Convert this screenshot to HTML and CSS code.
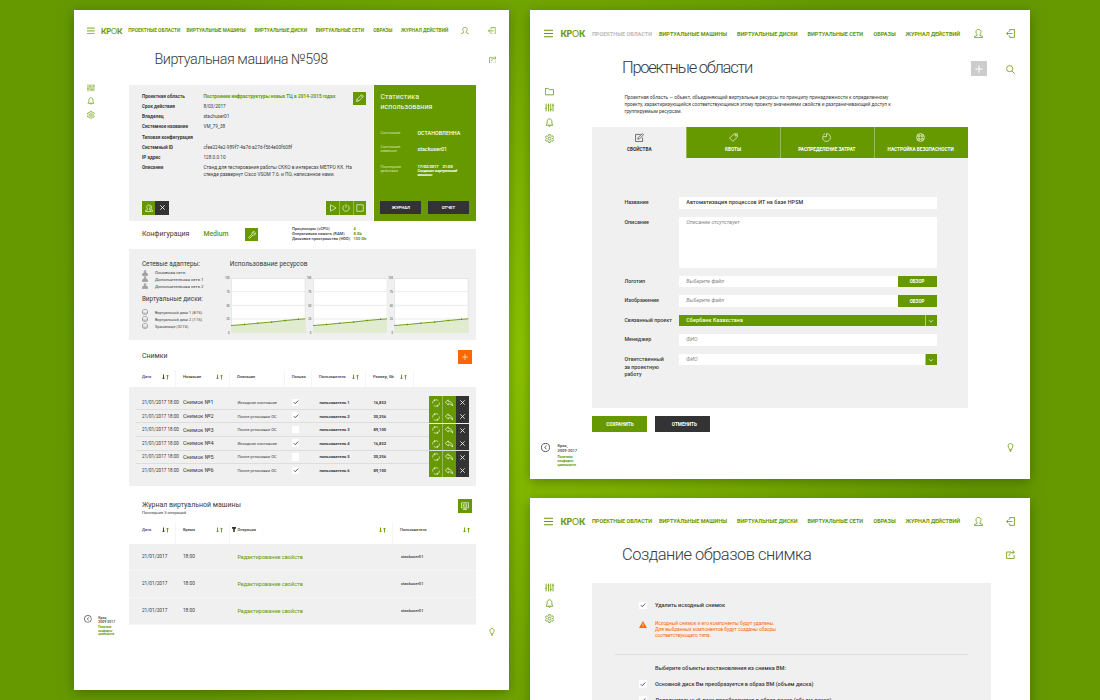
FILE: index.html
```html
<!DOCTYPE html>
<html lang="ru">
<head>
<meta charset="utf-8">
<title>КРОК</title>
<link rel="stylesheet" href="styles.css">
</head>
<body>

<svg class="sprite">
    <symbol id="i-menu" viewBox="0 0 18 18"><path d="M0 2.5h18M0 9h18M0 15.5h18"/></symbol>
    <symbol id="i-user" viewBox="0 0 16 16"><path d="M5.5 10C3.6 8 3.5 5.500 3.600 4.200 3.800 2 5.700.8 8 .8s4.200 1.200 4.400 3.400c.1 1.300 0 3.800-1.900 5.800v1.400l4.700 1.800v2H.8v-2l4.700-1.800z"/></symbol>
    <symbol id="i-exit" viewBox="0 0 16 16"><path d="M6.500 4.500V1h8.500v14H6.500v-3.500M11.500 8H1M4.500 4.500L1 8l3.500 3.500"/></symbol>
    <symbol id="i-share" viewBox="0 0 16 16"><path d="M9 3.500H1v11.500h13.500V9M5.500 10.500c0-4.500 3-6.500 9-6.500M11.500 1l3.500 3-3.500 3"/></symbol>
    <symbol id="i-folder" viewBox="0 0 16 16"><path d="M.8 14V2.500h5l1.700 2.200h7.700V14z"/></symbol>
    <symbol id="i-sliders" viewBox="0 0 16 16"><path d="M2 1v14M6.200 1v14M10.200 1v14M14.200 1v14M.5 9h3M4.700 4.500h3M8.700 11.500h3M12.700 4h3"/></symbol>
    <symbol id="i-bell" viewBox="0 0 16 16"><path d="M1.800 12.800c1.700-1.500 2-3 2-6.300C3.800 3.500 5.500 1.500 8 1.500s4.200 2 4.200 5c0 3.300.3 4.800 2 6.300zM6 13c.2 2.600 3.800 2.600 4 0"/></symbol>
    <symbol id="i-gear" viewBox="0 0 16 16"><path d="M6.500 1h3l.5 2 1.700.9 2-.6 1.500 2.500L13.700 7.200v1.600l1.500 1.400-1.500 2.500-2-.6-1.700.9-.5 2h-3L6 13l-1.700-.9-2 .6-1.500-2.500 1.500-1.400V7.200L.8 5.800l1.500-2.500 2 .6L6 3z"/><circle cx="8" cy="8" r="2.600"/></symbol>
    <symbol id="i-copy" viewBox="0 0 16 16"><circle cx="8" cy="8" r="7.200"/><path d="M9.800 5.200L6.500 8l3.300 2.800"/></symbol>
    <symbol id="i-bulb" viewBox="0 0 16 16"><path d="M6 11.500C6 9 3.800 8.500 3.800 5.200 3.800 2.500 5.600 1 8 1s4.200 1.500 4.200 4.200C12.200 8.500 10 9 10 11.500zM6.200 13.500h3.600M7 15.200h2"/></symbol>
    <symbol id="i-search" viewBox="0 0 16 16"><circle cx="6.500" cy="6.500" r="5.500"/><path d="M10.500 10.500l5 5"/></symbol>
    <symbol id="i-plus" viewBox="0 0 16 16"><path d="M8 2v12M2 8h12"/></symbol>
    <symbol id="i-pencil" viewBox="0 0 16 16"><path d="M1 15l1-4.500L11.500 1 15 4.500 5.500 14zM9.500 3L13 6.500M2 10.500L5.500 14"/></symbol>
    <symbol id="i-x" viewBox="0 0 16 16"><path d="M3 3l10 10M13 3L3 13"/></symbol>
    <symbol id="i-play" viewBox="0 0 16 16"><path d="M3 1.500v13L14 8z"/></symbol>
    <symbol id="i-power" viewBox="0 0 16 16"><path d="M8 .5v7M5 2.500a6.400 6.400 0 1 0 6 0"/></symbol>
    <symbol id="i-stop" viewBox="0 0 16 16"><path d="M1.500 1.500h13v13h-13z"/></symbol>
    <symbol id="i-users" viewBox="0 0 16 16"><path d="M5 10C2.500 7 3.500 1.500 7 1.500S11.500 7 9 10v1.500l3 1.500v2H1v-2l4-1.500zM10.500 2.500c3 .5 3.200 5 1.200 7.500v1l3.500 1.500V15h-2"/></symbol>
    <symbol id="i-wrench" viewBox="0 0 16 16"><path d="M1 13L8 6.500C7 3 9.500.500 12.700 1.200L10.500 3.500l2 2 2.400-2C15.500 7 13 9 9.800 8.200L3 15z"/></symbol>
    <symbol id="i-net" viewBox="0 0 16 16"><path d="M6 2h4v4H6zM1 11h4v3.500H1zM6 11h4v3.500H6zM11 11h4v3.500h-4zM8 6v5M3 11V8.500h10V11"/></symbol>
    <symbol id="i-disk" viewBox="0 0 16 16"><path d="M1.500 4c0-3.500 13-3.500 13 0v8c0 3.500-13 3.500-13 0zM1.500 9c0 3 13 3 13 0"/></symbol>
    <symbol id="i-check" viewBox="0 0 16 16"><path d="M2 8.500l4 4L14 4"/></symbol>
    <symbol id="i-sync" viewBox="0 0 16 16"><path d="M6 2C2 3 1 6 1.500 9M3.500 12.500C5 14.500 7 15 9 14.500M10 14c4-1 5-4 4.500-7M12.500 3.500C11 1.500 9 1 7 1.500M4 1l2.500 1L5 4.500M12 15l-2.500-1L11 11.500"/></symbol>
    <symbol id="i-reply" viewBox="0 0 16 16"><path d="M.8 6.500L6.500 1.500v3c5 0 8.500 3 8.700 9.500-1.500-3-4-4.500-8.700-4.500v2.500z"/></symbol>
    <symbol id="i-book" viewBox="0 0 16 16"><path d="M1 1.500h14v10.500H1zM8 1.500V14M3.500 4.500h2.500M3.500 7h2.500M3.500 9.500h2.500M10 4.500h2.500M10 7h2.500M10 9.500h2.500M4 15h8"/></symbol>
    <symbol id="i-edit" viewBox="0 0 16 16"><path d="M10 2.500H1v12.700h12.500V8M5 11l.8-3L13 1l2.200 2.200-7.200 7z"/></symbol>
    <symbol id="i-tag" viewBox="0 0 16 16"><path d="M1 9L9 1.500l5.500-.2L15 7 7 14.800z"/><circle cx="11.800" cy="4.300" r="1.200"/></symbol>
    <symbol id="i-pie" viewBox="0 0 16 16"><path d="M8 1a7 7 0 1 1-6.800 5.500H8z"/><path d="M5.500 1L1.500 4"/></symbol>
    <symbol id="i-ring" viewBox="0 0 16 16"><circle cx="8" cy="8" r="7"/><circle cx="8" cy="8" r="3"/><path d="M5 1.800l1 3.800M11 1.800l-1 3.800M5 14.200l1-3.800M11 14.200l-1-3.800M1.800 5l3.800 1M1.800 11l3.800-1M14.200 5l-3.800 1M14.200 11l-3.800-1"/></symbol>
    <symbol id="i-down" viewBox="0 0 16 16"><path d="M3 6l5 5 5-5"/></symbol>
    <symbol id="i-sort" viewBox="0 0 14 12"><path d="M3 1v9M.8 7.500L3 10l2.200-2.500"/><path class="up" d="M11 11V2M8.800 4.500L11 2l2.200 2.500"/></symbol>
    <symbol id="i-chart" viewBox="0 0 75 55" preserveAspectRatio="none">
        <path class="plot" d="M.25.25h74.500v54.500H.25z"/>
        <path class="grid" d="M0 13.700h75M0 27.300h75M0 41h75"/>
        <path class="area" d="M0 47.500L13.500 46.500 27 45.200 41 44 54.500 42.500 68 41.300 75 40.800V55H0z"/>
        <path class="line" d="M0 47.500L13.500 46.500 27 45.200 41 44 54.500 42.500 68 41.300 75 40.800"/>
        <path class="dots" d="M13 46.500h1M26.500 45.200h1M40.500 44h1M54 42.500h1M67.500 41.300h1"/>
    </symbol>
</svg>

<!-- Виртуальная машина -->
<section class="screen vm">
    <header class="topbar">
        <svg class="ico menu"><use href="#i-menu"/></svg>
        <div class="logo">КР<span>О</span>К</div>
        <nav>
            <a>ПРОЕКТНЫЕ ОБЛАСТИ</a><a>ВИРТУАЛЬНЫЕ МАШИНЫ</a><a>ВИРТУАЛЬНЫЕ ДИСКИ</a><a>ВИРТУАЛЬНЫЕ СЕТИ</a><a>ОБРАЗЫ</a><a>ЖУРНАЛ ДЕЙСТВИЙ</a>
        </nav>
        <svg class="ico"><use href="#i-user"/></svg>
        <svg class="ico exit"><use href="#i-exit"/></svg>
    </header>
    <div class="title-row">
        <h1>Виртуальная машина №598</h1>
        <svg class="ico"><use href="#i-share"/></svg>
    </div>
    <div class="body">
        <aside>
            <div class="side-menu">
                <svg class="ico"><use href="#i-sliders"/></svg>
                <svg class="ico"><use href="#i-bell"/></svg>
                <svg class="ico"><use href="#i-gear"/></svg>
            </div>
            <div class="copy">
                <svg class="ico"><use href="#i-copy"/></svg>
                <div>Крок,<br>2009-2017<a>Политика<br>конфиден-<br>циальности</a></div>
            </div>
        </aside>
        <main>
            <div class="info-row">
                <div class="info">
                    <dl>
                        <dt>Проектная область</dt><dd class="link">Построение инфраструктуры новых ТЦ в 2014-2015 годах</dd>
                        <dt>Срок действия</dt><dd>8/03/2017</dd>
                        <dt>Владелец</dt><dd>stachuser01</dd>
                        <dt>Системное название</dt><dd>VM_79_38</dd>
                        <dt>Типовая конфигурация</dt><dd></dd>
                        <dt>Системный ID</dt><dd>cfee224a2-989f7-4a7d-a27d-f564e00f608f</dd>
                        <dt>IP адрес</dt><dd>128.0.0.10</dd>
                        <dt>Описание</dt><dd class="descr">Станд для тестирования работы СККО в интересах МЕТРО КК. На<br>стенде развернут Cisco VSOM 7.6. и ПО, написанное нами.</dd>
                    </dl>
                    <button class="sq edit"><svg><use href="#i-pencil"/></svg></button>
                    <div class="info-btns">
                        <button class="sq"><svg><use href="#i-users"/></svg></button>
                        <button class="sq dark"><svg class="sm"><use href="#i-x"/></svg></button>
                        <span></span>
                        <button class="sq"><svg><use href="#i-play"/></svg></button>
                        <button class="sq line-left"><svg><use href="#i-power"/></svg></button>
                        <button class="sq line-left"><svg><use href="#i-stop"/></svg></button>
                    </div>
                </div>
                <div class="stats">
                    <h2>Статистика<br>использования</h2>
                    <div class="stat"><span>Состояние</span><b>ОСТАНОВЛЕННА</b></div>
                    <div class="stat who"><span>Состояние<br>изменил</span><b>stackuser01</b></div>
                    <div class="stat last"><span>Последние<br>действия</span><b>17/02/2017 &nbsp;&nbsp; 21:00<br><i>Создание виртуальной<br>машины</i></b></div>
                    <div class="stat-btns"><button>ЖУРНАЛ</button><button>ОТЧЕТ</button></div>
                </div>
            </div>

            <div class="config">
                <h3>Конфигурация</h3>
                <h3 class="medium">Medium</h3>
                <button class="sq"><svg><use href="#i-wrench"/></svg></button>
                <div class="specs">
                    <span>Процессоры (vCPU)</span><b>4</b>
                    <span>Оперативная память (RAM)</span><b>8 Gb</b>
                    <span>Дисковое пространство (HDD)</span><b>100 Gb</b>
                </div>
            </div>

            <div class="resources">
                <div class="res-list">
                    <h4>Сетевые адаптеры:</h4>
                    <p><svg><use href="#i-net"/></svg>Основная сеть</p>
                    <p><svg><use href="#i-net"/></svg>Дополнительная сеть 1</p>
                    <p><svg><use href="#i-net"/></svg>Дополнительная сеть 2</p>
                    <h4 class="disks">Виртуальные диски:</h4>
                    <p class="d"><svg><use href="#i-disk"/></svg>Виртуальный диск 1 (8 Гб)</p>
                    <p class="d"><svg><use href="#i-disk"/></svg>Виртуальный диск 2 (1 Гб)</p>
                    <p class="d"><svg><use href="#i-disk"/></svg>Хранилище (32 Гб)</p>
                </div>
                <div class="res-charts">
                    <h4>Использование ресурсов</h4>
                    <div class="charts">
                        <div class="axis"><i>100</i><i>75</i><i>50</i><i>25</i><i>0</i></div><svg class="chart"><use href="#i-chart"/></svg>
                        <div class="axis"><i>100</i><i>75</i><i>50</i><i>25</i><i>0</i></div><svg class="chart"><use href="#i-chart"/></svg>
                        <div class="axis"><i>100</i><i>75</i><i>50</i><i>25</i><i>0</i></div><svg class="chart"><use href="#i-chart"/></svg>
                    </div>
                </div>
            </div>

            <div class="sec-head">
                <h3>Снимки</h3>
                <button class="sq orange"><svg><use href="#i-plus"/></svg></button>
            </div>
            <div class="thead snaps-cols">
                <span>Дата<svg class="sort half"><use href="#i-sort"/></svg></span><span>Название<svg class="sort"><use href="#i-sort"/></svg></span><span>Описание</span><span>Полная</span><span>Пользователь<svg class="sort"><use href="#i-sort"/></svg></span><span>Размер, Gb<svg class="sort"><use href="#i-sort"/></svg></span>
            </div>
            <div class="snaps" id="snaps"></div>

            <div class="sec-head log-head">
                <div>
                    <h3>Журнал виртуальной машины</h3>
                    <small>Последние 5 операций</small>
                </div>
                <button class="sq"><svg><use href="#i-book"/></svg></button>
            </div>
            <div class="thead log-cols">
                <span>Дата<svg class="sort half"><use href="#i-sort"/></svg></span><span>Время<svg class="sort"><use href="#i-sort"/></svg></span><span class="op"><svg class="filter" viewBox="0 0 8 10"><path d="M0 0h8v2.500L5.500 5v5h-3V5L0 2.500z"/></svg>Операция<svg class="sort"><use href="#i-sort"/></svg></span><span>Пользователь<svg class="sort"><use href="#i-sort"/></svg></span>
            </div>
            <div class="log">
                <div class="log-cols"><span>21/01/2017</span><span>18:00</span><a>Редактирование свойств</a><b>stackuser01</b></div>
                <div class="log-cols"><span>21/01/2017</span><span>18:00</span><a>Редактирование свойств</a><b>stackuser01</b></div>
                <div class="log-cols"><span>21/01/2017</span><span>18:00</span><a>Редактирование свойств</a><b>stackuser01</b></div>
            </div>
        </main>
        <div class="rail"><svg class="ico"><use href="#i-bulb"/></svg></div>
    </div>
</section>

<div class="right">
    <!-- Проектные области -->
    <section class="screen areas">
        <header class="topbar">
            <svg class="ico menu"><use href="#i-menu"/></svg>
            <div class="logo">КР<span>О</span>К</div>
            <nav>
                <a class="off">ПРОЕКТНЫЕ ОБЛАСТИ</a><a>ВИРТУАЛЬНЫЕ МАШИНЫ</a><a>ВИРТУАЛЬНЫЕ ДИСКИ</a><a>ВИРТУАЛЬНЫЕ СЕТИ</a><a>ОБРАЗЫ</a><a>ЖУРНАЛ ДЕЙСТВИЙ</a>
            </nav>
            <svg class="ico"><use href="#i-user"/></svg>
            <svg class="ico exit"><use href="#i-exit"/></svg>
        </header>
        <div class="title-row">
            <h1>Проектные области</h1>
            <button class="add"><svg><use href="#i-plus"/></svg></button>
            <svg class="ico"><use href="#i-search"/></svg>
        </div>
        <div class="body">
            <aside>
                <div class="side-menu">
                    <svg class="ico"><use href="#i-folder"/></svg>
                    <svg class="ico"><use href="#i-sliders"/></svg>
                    <svg class="ico"><use href="#i-bell"/></svg>
                    <svg class="ico"><use href="#i-gear"/></svg>
                </div>
                <div class="copy">
                    <svg class="ico"><use href="#i-copy"/></svg>
                    <div>Крок,<br>2009-2017<a>Политика<br>конфиден-<br>циальности</a></div>
                </div>
            </aside>
            <main>
                <p class="lead">Проектная область — объект, объединяющий виртуальные ресурсы по принципу принадлежности к определенному<br>проекту, характиризующийся соответствующимся этому проекту значениями свойств и разграничивающий доступ к<br>группируемым ресурсам.</p>
                <div class="tabs">
                    <div class="tab active"><svg><use href="#i-edit"/></svg>СВОЙСТВА</div>
                    <div class="tab"><svg><use href="#i-tag"/></svg>КВОТЫ</div>
                    <div class="tab"><svg><use href="#i-pie"/></svg>РАСПРЕДЕЛЕНИЕ ЗАТРАТ</div>
                    <div class="tab"><svg><use href="#i-ring"/></svg>НАСТРОЙКА БЕЗОПАСНОСТИ</div>
                </div>
                <div class="form">
                    <label>Название</label><div class="field filled">Автоматизация процессов ИТ на базе HPSM</div>
                    <label>Описание</label><div class="field area-field">Описание отсутствует</div>
                    <label>Логотип</label><div class="field">Выберите файл<button>ОБЗОР</button></div>
                    <label>Изображение</label><div class="field">Выберите файл<button>ОБЗОР</button></div>
                    <label>Связанный проект</label><div class="field select">Сбербанк Казахстана<button class="arrow"><svg><use href="#i-down"/></svg></button></div>
                    <label>Менеджер</label><div class="field">ФИО</div>
                    <label>Ответственный<br>за проектную<br>работу</label><div class="field">ФИО<button class="arrow"><svg><use href="#i-down"/></svg></button></div>
                </div>
                <div class="form-btns"><button>СОХРАНИТЬ</button><button class="dark">ОТМЕНИТЬ</button></div>
            </main>
            <div class="rail"><svg class="ico"><use href="#i-bulb"/></svg></div>
        </div>
    </section>

    <!-- Создание образов -->
    <section class="screen images">
        <header class="topbar">
            <svg class="ico menu"><use href="#i-menu"/></svg>
            <div class="logo">КР<span>О</span>К</div>
            <nav>
                <a>ПРОЕКТНЫЕ ОБЛАСТИ</a><a>ВИРТУАЛЬНЫЕ МАШИНЫ</a><a>ВИРТУАЛЬНЫЕ ДИСКИ</a><a>ВИРТУАЛЬНЫЕ СЕТИ</a><a>ОБРАЗЫ</a><a>ЖУРНАЛ ДЕЙСТВИЙ</a>
            </nav>
            <svg class="ico"><use href="#i-user"/></svg>
            <svg class="ico exit"><use href="#i-exit"/></svg>
        </header>
        <div class="title-row">
            <h1>Создание образов снимка</h1>
            <svg class="ico"><use href="#i-share"/></svg>
        </div>
        <div class="body">
            <aside>
                <div class="side-menu">
                    <svg class="ico"><use href="#i-sliders"/></svg>
                    <svg class="ico"><use href="#i-bell"/></svg>
                    <svg class="ico"><use href="#i-gear"/></svg>
                </div>
            </aside>
            <main>
                <div class="opt"><span class="check"><svg><use href="#i-check"/></svg></span>Удалить исходный снимок</div>
                <div class="warn">
                    <svg viewBox="0 0 16 14"><path d="M8 0l8 14H0z"/><path class="mark" d="M8 5v4.500M8 11v1.500"/></svg>
                    <p>Исходный снимок и его компоненты будут удалены.<br>Для выбранных компонентов будут созданы обзоры<br>соответствующего типа.</p>
                </div>
                <hr>
                <div class="pick">Выберите объекты востановления из снимка ВМ:</div>
                <div class="opt"><span class="check"><svg><use href="#i-check"/></svg></span>Основной диск Вм преобразуется в образ ВМ (объем диска)</div>
                <div class="opt"><span class="check"><svg><use href="#i-check"/></svg></span>Дополнительный диск преобразуется в образ диска (объем диска)</div>
            </main>
        </div>
    </section>
</div>

<script src="script.js"></script>
</body>
</html>
```
FILE: script.js
```js
const snaps = [
    ["Исходное состояние", true, "16,852"],
    ["После установки ОС", true, "20,256"],
    ["После установки ОС", false, "89,100"],
    ["Исходное состояние", true, "16,852"],
    ["После установки ОС", false, "20,256"],
    ["После установки ОС", true, "89,100"]
];

document.getElementById("snaps").innerHTML = snaps.map(([text, full, size], i) => `
    <div class="snap snaps-cols">
        <span>21/01/2017 18:00</span>
        <span class="name">Снимок №${i + 1}</span>
        <span class="note">${text}</span>
        <span><i class="check">${full ? '<svg><use href="#i-check"/></svg>' : ""}</i></span>
        <b>пользователь ${i + 1}</b>
        <b>${size}</b>
        <div class="acts">
            <button class="sq"><svg><use href="#i-sync"/></svg></button>
            <button class="sq line-left"><svg><use href="#i-reply"/></svg></button>
            <button class="sq dark"><svg class="sm"><use href="#i-x"/></svg></button>
        </div>
    </div>`).join("");
```
FILE: styles.css
```css
* {
    box-sizing: border-box;
}

body {
    margin: 0;
    height: 700px;
    overflow: hidden;
    padding: 10px 0 0 74.400px;
    display: flex;
    gap: 20.600px;
    align-items: flex-start;
    background: radial-gradient(circle 470px at 520px 350px, #8fc700 0%, #84ba00 30%, #669900 100%);
    font-family: Roboto, "Liberation Sans", sans-serif;
    color: #3a3a3a;
}

h1, h2, h3, h4, p, dl, dd, small {
    margin: 0;
    font-weight: 400;
}

svg {
    display: block;
    fill: none;
    stroke: currentColor;
    flex: none;
}

.sprite {
    position: absolute;
    width: 0;
    height: 0;
}

button {
    border: 0;
    padding: 0;
    margin: 0;
    font-family: inherit;
    font-weight: 700;
    color: #fff;
    background: #669900;
    display: flex;
    align-items: center;
    justify-content: center;
}

button.dark, .sq.dark {
    background: #333;
}

.screen {
    background: #fff;
    box-shadow: 0 3px 12px rgba(40, 70, 0, .5);
    display: flex;
    flex-direction: column;
}

.right {
    display: flex;
    flex-direction: column;
    gap: 19px;
}

.right .screen {
    width: 500px;
}

.vm {
    width: 435px;
    height: 680px;
}

.areas {
    height: 468.500px;
}

.images {
    height: 230px;
}

/* header */
.topbar {
    height: 47px;
    padding-left: 14.500px;
    display: flex;
    align-items: center;
    color: #669900;
}

.ico {
    width: 9px;
    height: 9px;
    stroke-width: 1.4;
    color: #669900;
}

.ico.menu {
    stroke-width: 2;
}

.logo {
    width: 24.500px;
    margin: 1px 7px 0 7px;
    font: 700 8.800px/10px Lato, sans-serif;
    white-space: nowrap;
    -webkit-text-stroke: .2px #669900;
}

.logo span {
    font-weight: 400;
    -webkit-text-stroke: 0;
}

nav {
    width: 382.500px;
    display: grid;
    grid-template-columns: 67px 78px 70.500px 66px 32px 69px;
    font-size: 5.500px;
    font-weight: 700;
    white-space: nowrap;
}

nav .off {
    color: #bbb;
}

.exit {
    margin-left: 22.500px;
}

.vm .topbar {
    zoom: .87;
}

.title-row {
    height: 20px;
    padding: 0 15px 0 92px;
    display: flex;
    align-items: center;
}

h1 {
    flex: 1;
    font-size: 16.500px;
    line-height: 20px;
    font-weight: 300;
    letter-spacing: -.52px;
    white-space: nowrap;
}

.vm .title-row {
    zoom: .87;
}

.areas h1 {
    padding-top: 1px;
    letter-spacing: -1.250px;
}

.add {
    width: 15.500px;
    height: 15.500px;
    margin: 3px 19px 0 0;
    background: #ccc;
}

.add svg {
    width: 10px;
    height: 10px;
    stroke-width: 1.500;
}

.areas .title-row .ico {
    margin-top: 4px;
}

/* side columns */
.body {
    flex: 1;
    display: flex;
}

aside {
    width: 62.400px;
    display: flex;
    flex-direction: column;
    justify-content: space-between;
}

.side-menu {
    display: flex;
    flex-direction: column;
    gap: 6.500px;
    padding-left: 15px;
}

.copy {
    display: flex;
    gap: 7px;
    padding-left: 11.500px;
    font-size: 4px;
    line-height: 4.600px;
    font-weight: 500;
}

.copy .ico {
    color: #333;
    margin-top: -.7px;
}

.copy a {
    display: block;
    margin-top: 3px;
    font-size: 3.300px;
    line-height: 3.900px;
    font-weight: 700;
    color: #669900;
}

.vm aside {
    width: 54.500px;
}

.vm .side-menu, .vm .copy {
    zoom: .87;
}

.rail {
    flex: 1;
    display: flex;
    align-items: flex-end;
    justify-content: flex-end;
}

/* virtual machine */
.vm .body {
    padding-top: 15.500px;
}

.vm .copy {
    margin-bottom: 61.500px;
}

.vm .rail {
    padding: 0 13px 54px 0;
}

.vm .rail .ico {
    width: 8px;
    height: 8px;
}

.vm main {
    width: 347px;
    margin-top: .9px;
}

.info-row {
    display: flex;
    gap: .5px;
    height: 136px;
}

.info {
    position: relative;
    width: 244.500px;
    padding: 7px 7px 6px 13px;
    background: #f0f0f0;
    display: flex;
    flex-direction: column;
    justify-content: space-between;
}

.info dl {
    display: grid;
    grid-template-columns: 61.500px auto;
    font-size: 4.700px;
    line-height: 10.250px;
    white-space: nowrap;
}

dt {
    font-weight: 700;
}

dd.link {
    color: #669900;
    font-weight: 700;
    letter-spacing: .04px;
}

dd.descr {
    font-size: 4.800px;
    line-height: 6.200px;
    padding-top: 2px;
}

.sq {
    width: 13.500px;
    height: 13.500px;
    flex: none;
}

.sq svg {
    width: 8px;
    height: 8px;
    stroke-width: 1.300;
}

.sq svg.sm {
    width: 7px;
    height: 7px;
    stroke-width: 1.800;
}

.sq.line-left {
    box-shadow: inset .5px 0 0 #c5dba0;
}

.sq.edit {
    position: absolute;
    top: 7px;
    right: 7px;
}

.info-btns {
    display: flex;
}

.info-btns span {
    flex: 1;
}

.stats {
    width: 102px;
    padding: 7.500px 7px 6.500px 6.500px;
    background: #669900;
    color: #fff;
}

.stats h2 {
    font-size: 7px;
    line-height: 10.300px;
    letter-spacing: .1px;
}

.stat {
    display: grid;
    grid-template-columns: 37px auto;
    align-items: center;
    height: 9px;
    margin-top: 16px;
    font-size: 4px;
    line-height: 4.300px;
    white-space: nowrap;
}

.stat span {
    color: #d5e6b5;
}

.stat b {
    font-size: 5.400px;
    font-weight: 500;
}

.stat.who {
    margin-top: 7px;
}

.stat.last {
    margin-top: 11px;
    height: 13px;
    align-items: start;
}

.stat.last b {
    font-size: 4.100px;
    line-height: 4.200px;
    font-weight: 700;
    letter-spacing: -.06px;
}

.stat.last i {
    font-size: 3.900px;
}

.stat-btns {
    display: flex;
    justify-content: space-between;
    margin-top: 23px;
}

.stat-btns button {
    width: 41px;
    height: 13.500px;
    background: #333;
    font-size: 4.200px;
}

.config {
    height: 28px;
    padding-left: 13px;
    display: flex;
    align-items: center;
}

h3 {
    font-size: 7px;
    line-height: 9px;
    width: 61.500px;
    white-space: nowrap;
}

h3.medium {
    width: 41.500px;
    color: #669900;
    font-weight: 500;
    font-size: 6.900px;
}

.specs {
    margin-left: 33.500px;
    display: grid;
    grid-template-columns: 61.500px auto;
    font-size: 4.050px;
    line-height: 4.900px;
    font-weight: 500;
    white-space: nowrap;
}

.specs b {
    color: #669900;
}

.resources {
    height: 91.500px;
    padding: 10.500px 7px 0 13px;
    background: #f0f0f0;
    display: flex;
}

.res-list {
    width: 82.500px;
}

h4 {
    font-size: 6.400px;
    line-height: 10px;
    white-space: nowrap;
}

.res-list p {
    display: flex;
    align-items: center;
    gap: 7px;
    height: 6.900px;
    font-size: 4.400px;
    white-space: nowrap;
}

.res-list p.d {
    font-size: 3.800px;
}

.res-list p svg {
    width: 6px;
    height: 6px;
    stroke-width: 1.300;
    color: #666;
}

.res-list .disks {
    margin: 3.800px 0 5.200px;
}

.res-charts h4 {
    padding-left: 6px;
    font-size: 6.500px;
}

.charts {
    display: flex;
    margin-top: 9px;
}

.axis {
    width: 7.200px;
    height: 59px;
    margin-top: -2px;
    padding-right: 1.500px;
    display: flex;
    flex-direction: column;
    justify-content: space-between;
    text-align: right;
    font-size: 2.700px;
    line-height: 4px;
}

.axis i {
    font-style: normal;
}

.chart {
    width: 74.500px;
    height: 55px;
    stroke: none;
}

.plot {
    fill: #fff;
    stroke: #d4d4d4;
    stroke-width: .7;
}

.grid {
    stroke: #ddd;
    stroke-width: .6;
}

.area {
    fill: #e0ebd0;
}

.line {
    stroke: #669900;
    stroke-width: .9;
}

.dots {
    stroke: #558800;
    stroke-width: 1.600;
}

.sec-head {
    height: 30px;
    padding: 10px 4px 0 13px;
    display: flex;
    justify-content: space-between;
}

.sec-head > h3 {
    margin-top: 2px;
}

.sq.orange {
    background: #ff6600;
}

.thead {
    height: 17px;
    font-size: 4px;
    line-height: 13px;
    font-weight: 500;
}

.snaps-cols {
    display: grid;
    grid-template-columns: 47.500px 54px 54.800px 27.200px 54px 48px;
    white-space: nowrap;
}

.thead span {
    display: flex;
    justify-content: space-between;
    padding: 0 6px 0 6.500px;
    border-right: 1px solid #f5f5f5;
    height: 17px;
}

.thead span:first-child {
    padding-left: 13px;
}

.sort {
    width: 7px;
    height: 6px;
    margin: 3.500px 0 0 auto;
    color: #669900;
    stroke-width: 1.800;
}

.sort.half {
    color: #333;
}

.sort .up, .up {
    stroke: #669900;
}

.thead.log-cols .sort {
    margin-top: 5px;
}

.snaps {
    height: 98.500px;
    padding: 9px 6.500px 0 7px;
    background: #f0f0f0;
}

.snap {
    grid-template-columns: 41px 54.500px 54.500px 27.500px 54px 54.500px auto;
    height: 13.600px;
    align-items: center;
    font-size: 4.600px;
    padding-left: 6px;
    border-bottom: 1px solid #ddd;
}

.snap:last-child {
    border-color: transparent;
}

.snap .name {
    font-size: 5.600px;
}

.snap .note, .snap b {
    font-size: 4.100px;
}

.check {
    width: 7.500px;
    height: 7.500px;
    background: #fff;
    display: flex;
    align-items: center;
    justify-content: center;
    flex: none;
}

.check svg {
    width: 6px;
    height: 6px;
    stroke-width: 2.300;
}

.acts {
    display: flex;
    height: 13.100px;
    margin-bottom: -1px;
    justify-content: flex-end;
}

.acts .sq {
    height: 13.100px;
    width: 13.500px;
}

.acts .sq svg:not(.sm) {
    stroke-width: 1.300;
    width: 8px;
    height: 8px;
}

.log-head {
    height: 36px;
    padding-top: 13.500px;
}

.log-head h3 {
    margin-top: 1.500px;
}

.log-head small {
    display: block;
    font-size: 4.100px;
    line-height: 6px;
}

.log-cols {
    display: grid;
    grid-template-columns: 47.500px 54px 163px 82.500px;
}

.thead.log-cols {
    height: 22px;
    line-height: 16px;
}

.thead.log-cols span {
    height: 22px;
}

.thead .op {
    padding-left: 2px;
    gap: 1px;
}

.filter {
    width: 4px;
    height: 5px;
    margin-top: 5.500px;
    fill: #333;
    stroke: none;
}

.thead.log-cols span:last-child {
    border: 0;
}

.log {
    height: 81.500px;
    background: #f0f0f0;
}

.log .log-cols {
    height: 27.200px;
    line-height: 26.500px;
    font-size: 4.800px;
    border-bottom: 1px solid #f5f5f5;
}

.log .log-cols > span:first-child {
    padding-left: 13px;
}

.log .log-cols > :nth-child(2) {
    padding-left: 6.500px;
}

.log .log-cols > a {
    padding-left: 7px;
    font-size: 5.500px;
    color: #669900;
}

.log .log-cols > b {
    padding-left: 7.500px;
    font-size: 4.100px;
    font-weight: 500;
}

/* project areas */
.areas .body {
    padding-top: 10px;
}

.areas .copy {
    margin-bottom: 10.500px;
}

.areas .rail {
    padding: 0 15px 26.500px 0;
}

.areas main {
    width: 375.200px;
}

.lead {
    height: 40.300px;
    padding: 7.300px 0 0 32px;
    font-size: 4.800px;
    line-height: 7px;
    white-space: nowrap;
}

.tabs {
    display: flex;
}

.tab {
    flex: 1;
    height: 31px;
    background: #669900;
    color: #fff;
    font-size: 4.700px;
    line-height: 6px;
    font-weight: 700;
    display: flex;
    flex-direction: column;
    align-items: center;
    gap: 5.500px;
    padding-top: 5.500px;
}

.tab + .tab {
    box-shadow: inset .5px 0 0 #c5dba0;
}

.tab.active {
    background: #f0f0f0;
    color: #333;
}

.tab svg {
    width: 9px;
    height: 9px;
    stroke-width: 1.200;
}

.form {
    height: 250px;
    padding: 39px 31px 0 32px;
    background: #f0f0f0;
    display: grid;
    grid-template-columns: 54.400px 257.800px;
    grid-template-rows: 11.500px 51px 11.500px 11.500px 11.500px 11.500px 24px;
    row-gap: 8px;
    font-size: 5.350px;
}

.form label {
    font-weight: 500;
    line-height: 7.700px;
    padding-top: 2px;
    white-space: nowrap;
}

.field {
    height: 11.500px;
    padding-left: 7.500px;
    background: #fff;
    color: #888;
    font-style: italic;
    line-height: 11.500px;
    display: flex;
    justify-content: space-between;
}

.field.filled {
    color: #333;
    font-style: normal;
    font-weight: 500;
    letter-spacing: .12px;
}

.area-field {
    height: 51px;
}

.field button {
    width: 39px;
    font-size: 4.500px;
}

.field button.arrow {
    width: 11.500px;
    border-left: .5px solid #b2cc80;
}

.arrow svg {
    width: 6px;
    height: 6px;
    stroke-width: 2;
}

.field.select {
    background: #669900;
    color: #fff;
    font-style: normal;
    font-weight: 500;
    letter-spacing: .12px;
}

.form-btns {
    display: flex;
    gap: 7.500px;
    margin-top: 8px;
}

.form-btns button {
    width: 55px;
    height: 15.500px;
    font-size: 4.700px;
}

.form-btns .dark {
    padding-left: 4px;
}

/* image creation */
.images .body {
    padding-top: 18.800px;
}

.images main {
    width: 398.500px;
    padding: 17.500px 23px 0;
    background: #f0f0f0;
    font-size: 5.550px;
    font-weight: 500;
    white-space: nowrap;
}

.opt {
    display: flex;
    align-items: center;
    gap: 8px;
    height: 9px;
    margin-bottom: 6.500px;
    padding-left: 24px;
}

.warn {
    display: flex;
    gap: 8px;
    padding-left: 23.500px;
    margin-top: 11px;
    color: #ff6600;
    font-size: 4.850px;
    line-height: 5.800px;
}

.warn svg {
    width: 8px;
    height: 7px;
    fill: #ff6600;
    stroke: none;
}

.warn p {
    padding-top: .6px;
}

.warn .mark {
    stroke: #fff;
    stroke-width: 1.500;
}

hr {
    border: 0;
    height: 1px;
    margin: 15px 0 9.500px;
    background: #ddd;
}

.pick {
    padding-left: 39.500px;
    height: 9px;
    line-height: 9px;
    margin-bottom: 6.300px;
}
```
